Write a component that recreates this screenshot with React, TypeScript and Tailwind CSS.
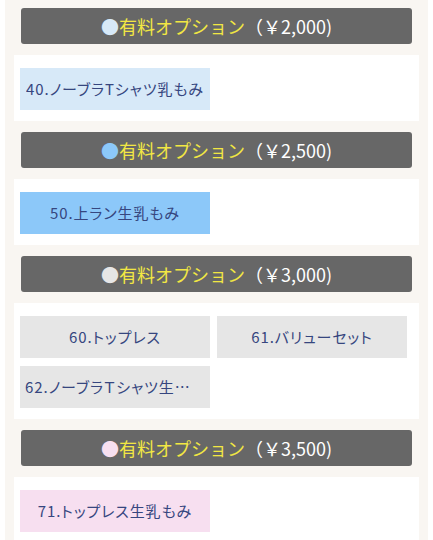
import React from 'react'

type Section = {
    price: string
    dot: string
    box: string
    items: string[]
}

const sections: Section[] = [
    { price: "2,000", dot: "text-[#d7e9f8]", box: "bg-[#d7e9f8]", items: ["40.ノーブラTシャツ乳もみ"] },
    { price: "2,500", dot: "text-[#8cc8f9]", box: "bg-[#8cc8f9]", items: ["50.上ラン生乳もみ"] },
    { price: "3,000", dot: "text-[#e6e6e6]", box: "bg-[#e6e6e6]", items: ["60.トップレス", "61.バリューセット", "62.ノーブラＴシャツ生乳もみ"] },
    { price: "3,500", dot: "text-[#f7dff0]", box: "bg-[#f7dff0]", items: ["71.トップレス生乳もみ"] },
]

const OptionBlock = ({ section }: { section: Section }) => {
    return (
        <div className="pb-[11px]">
            <div className="mx-[7px] h-[36px] rounded-[3px] bg-[#676767] flex items-center justify-center text-[18px] leading-none">
                <span className={section.dot}>●</span>
                <span className="text-[#f2e743]">有料オプション</span>
                <span className="text-white">（￥{section.price})</span>
            </div>
            <div className="mt-[11px] bg-white pt-[13px] pb-[11px] pl-[6px]">
                <div className="grid grid-cols-[190px_190px] gap-x-[7px] gap-y-[8px]">
                    {section.items.map((item) => (
                        <div key={item} className={`${section.box} h-[42px] px-[5px] flex items-center justify-center text-[15px] text-[#36467f] tracking-[0.06em] [font-feature-settings:'palt']`}>
                            <span className="truncate">{item}</span>
                        </div>
                    ))}
                </div>
            </div>
        </div>
    )
}

export default function App() {
    return (
        <div className="w-[433px] h-[540px] overflow-hidden bg-white px-[5px] font-['Noto_Sans_CJK_JP','Noto_Sans',sans-serif]">
            <div className="bg-[#f9f6f2] px-[9px] pt-[8px] min-h-full">
                {sections.map((s) => (
                    <OptionBlock key={s.price} section={s} />
                ))}
            </div>
        </div>
    )
}
